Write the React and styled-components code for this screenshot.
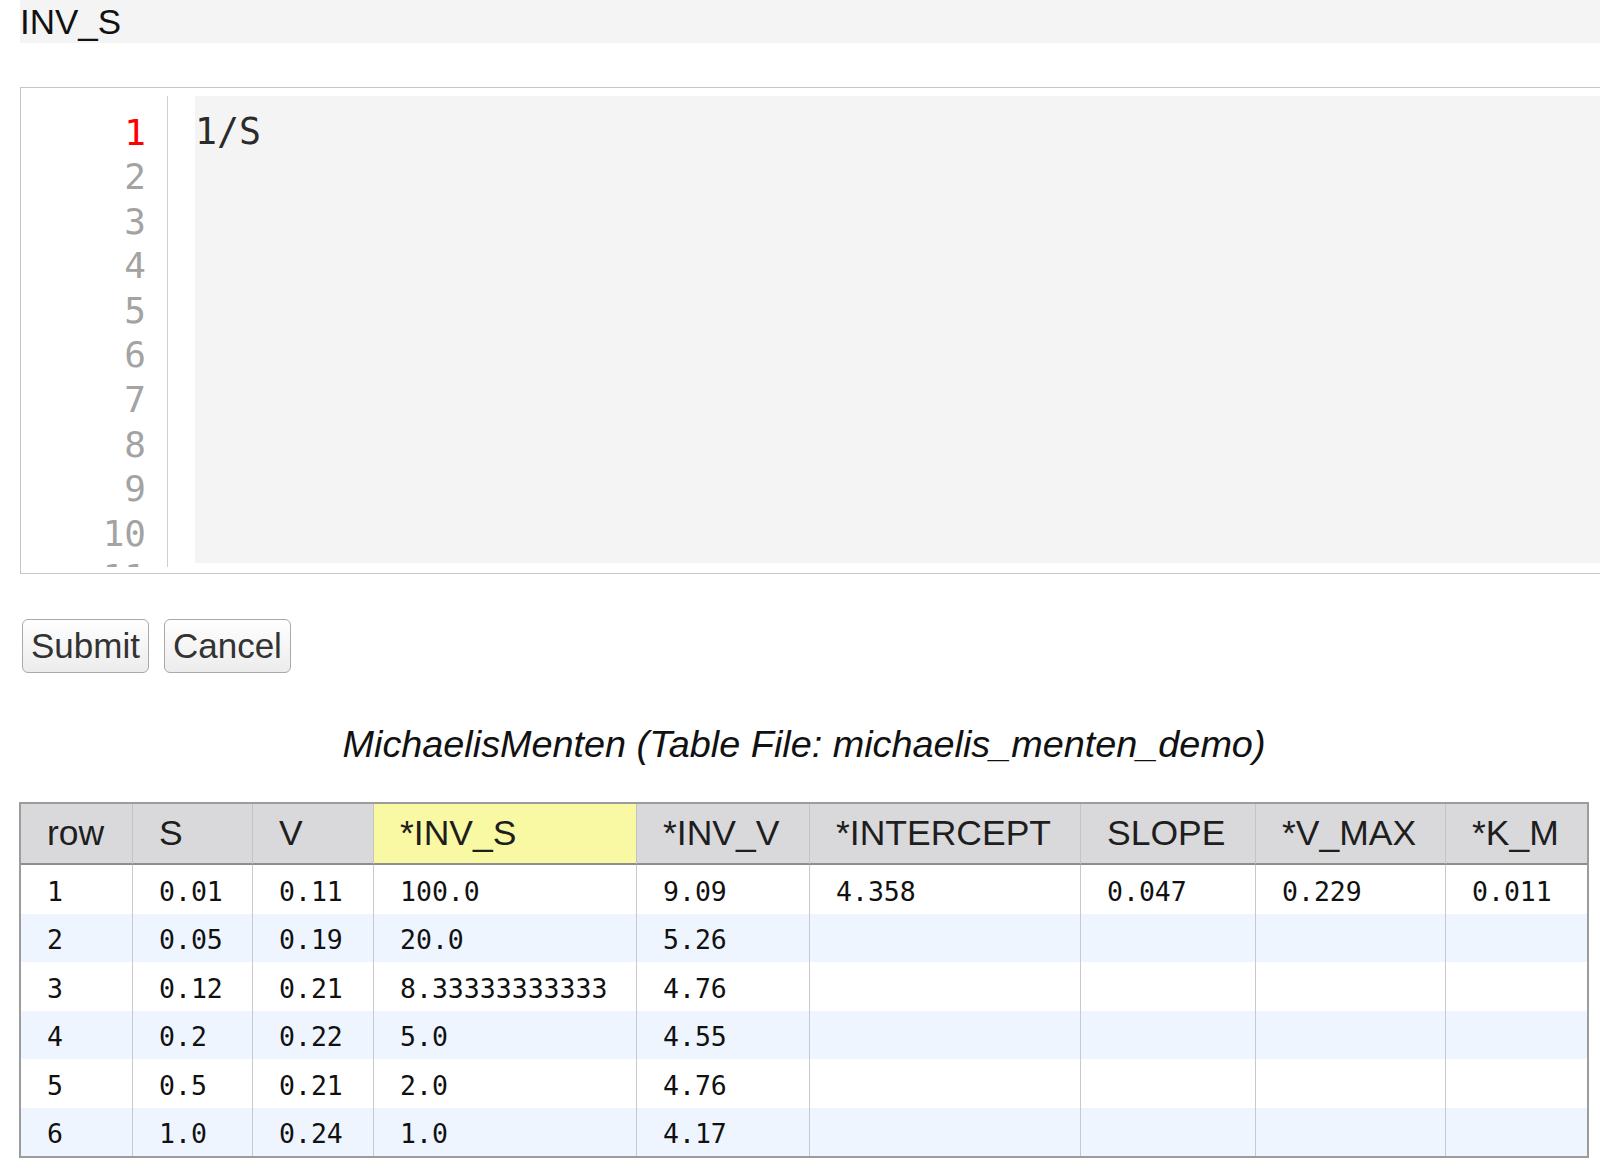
import React from "react";
import styled, { createGlobalStyle } from "styled-components";

const GlobalStyle = createGlobalStyle`
    * {
        box-sizing: border-box;
    }
    body {
        margin: 0;
        overflow: hidden;
        background: #ffffff;
        font-family: "Liberation Sans", Arial, sans-serif;
    }
`;

const Page = styled.div`
    width: 1600px;
    height: 1176px;
    padding-left: 20px;
    overflow: hidden;
`;

const FieldHeader = styled.div`
    height: 43px;
    line-height: 43px;
    background: #f4f4f4;
    color: #111;
    font-size: 35px;
    white-space: nowrap;
`;

const EditorBox = styled.div`
    margin-top: 44px;
    margin-right: -40px;
    height: 487px;
    border: 1px solid #c6c6c6;
    padding: 8px 0 5px 0;
    display: flex;
    align-items: flex-start;
`;

// line 11 is clipped by the gutter, as in an editor scrolled to the top
const Gutter = styled.div`
    width: 147px;
    height: 471px;
    flex-shrink: 0;
    overflow: hidden;
    border-right: 1px solid #cfcfcf;
    padding: 14.5px 21px 0 0;
    text-align: right;
    font-family: "DejaVu Sans Mono", monospace;
    font-size: 36px;
    line-height: 44.6px;
`;

const LineNo = styled.div`
    color: ${p => (p.active ? "#ff0000" : "#a3a3a3")};
`;

const CodeArea = styled.div`
    flex: 1;
    margin-left: 27px;
    height: 467px;
    background: #f4f4f4;
    padding-top: 14px;
    color: #2b2b2b;
    font-family: "DejaVu Sans Mono", monospace;
    font-size: 36.5px;
    line-height: 44.6px;
`;

const ButtonRow = styled.div`
    margin-top: 45px;
    display: flex;
    gap: 15px;
    padding-left: 2px;
`;

const Button = styled.button`
    height: 54px;
    padding: 0 8px;
    border: 1px solid #a9a9a9;
    border-radius: 6px;
    background: linear-gradient(#ffffff, #ececec);
    color: #333;
    font-family: "Liberation Sans", Arial, sans-serif;
    font-size: 35px;
    line-height: 52px;
    &:focus {
        outline: 0;
    }
`;

const Title = styled.div`
    width: 1570px;
    margin-top: 50px;
    margin-left: -1px;
    text-align: center;
    font-style: italic;
    font-size: 37.8px;
    line-height: 43px;
    color: #111;
    white-space: nowrap;
`;

const Table = styled.table`
    margin-top: 36px;
    margin-left: -1px;
    width: 1570px;
    table-layout: fixed;
    border-collapse: separate;
    border-spacing: 0;
    border: 2px solid #9c9c9c;
`;

const Th = styled.th`
    height: 61px;
    padding: 0 0 0 26px;
    text-align: left;
    font-weight: normal;
    font-size: 35.5px;
    color: #1e1e1e;
    white-space: nowrap;
    background: ${p => (p.highlight ? "#f9f9a4" : "#d9d9db")};
    border-bottom: 2px solid #8e8e8e;
    border-left: ${p => (p.first ? "none" : "1px solid #c4c4c4")};
`;

const Row = styled.tr`
    background: ${p => (p.striped ? "#eef5fe" : "#ffffff")};
`;

const Td = styled.td`
    height: 48.5px;
    padding: 4px 0 0 26px;
    font-family: "DejaVu Sans Mono", monospace;
    font-size: 26.5px;
    color: #111;
    white-space: nowrap;
    border-left: ${p => (p.first ? "none" : "1px solid #c9c9c9")};
`;

const columns = [
    { name: "row", width: 111 },
    { name: "S", width: 120 },
    { name: "V", width: 121 },
    { name: "*INV_S", width: 263, highlight: true },
    { name: "*INV_V", width: 173 },
    { name: "*INTERCEPT", width: 271 },
    { name: "SLOPE", width: 175 },
    { name: "*V_MAX", width: 190 },
    { name: "*K_M", width: 142 }
];

const rows = [
    ["1", "0.01", "0.11", "100.0", "9.09", "4.358", "0.047", "0.229", "0.011"],
    ["2", "0.05", "0.19", "20.0", "5.26", "", "", "", ""],
    ["3", "0.12", "0.21", "8.33333333333", "4.76", "", "", "", ""],
    ["4", "0.2", "0.22", "5.0", "4.55", "", "", "", ""],
    ["5", "0.5", "0.21", "2.0", "4.76", "", "", "", ""],
    ["6", "1.0", "0.24", "1.0", "4.17", "", "", "", ""]
];

const lineNumbers = [1, 2, 3, 4, 5, 6, 7, 8, 9, 10, 11];

export default function App() {
    return (
        <Page>
            <GlobalStyle />
            <FieldHeader>INV_S</FieldHeader>
            <EditorBox>
                <Gutter>
                    {lineNumbers.map(n => (
                        <LineNo key={n} active={n === 1}>
                            {n}
                        </LineNo>
                    ))}
                </Gutter>
                <CodeArea>1/S</CodeArea>
            </EditorBox>
            <ButtonRow>
                <Button>Submit</Button>
                <Button>Cancel</Button>
            </ButtonRow>
            <Title>MichaelisMenten (Table File: michaelis_menten_demo)</Title>
            <Table>
                <colgroup>
                    {columns.map(c => (
                        <col key={c.name} style={{ width: c.width }} />
                    ))}
                </colgroup>
                <thead>
                    <tr>
                        {columns.map((c, i) => (
                            <Th key={c.name} first={i === 0} highlight={c.highlight}>
                                {c.name}
                            </Th>
                        ))}
                    </tr>
                </thead>
                <tbody>
                    {rows.map((r, ri) => (
                        <Row key={ri} striped={ri % 2 === 1}>
                            {r.map((v, ci) => (
                                <Td key={ci} first={ci === 0}>
                                    {v}
                                </Td>
                            ))}
                        </Row>
                    ))}
                </tbody>
            </Table>
        </Page>
    );
}
